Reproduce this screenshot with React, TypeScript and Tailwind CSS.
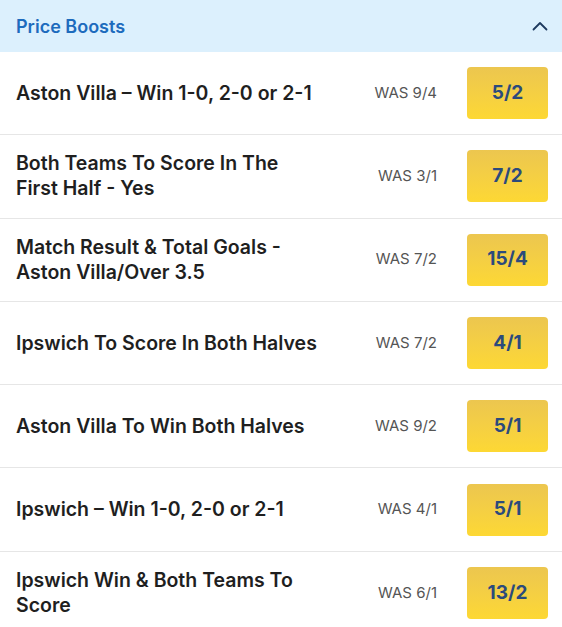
import React from 'react';

const boosts = [
  { title: 'Aston Villa – Win 1-0, 2-0 or 2-1', was: '9/4', price: '5/2' },
  { title: 'Both Teams To Score In The First Half - Yes', was: '3/1', price: '7/2' },
  { title: 'Match Result & Total Goals - Aston Villa/Over 3.5', was: '7/2', price: '15/4' },
  { title: 'Ipswich To Score In Both Halves', was: '7/2', price: '4/1' },
  { title: 'Aston Villa To Win Both Halves', was: '9/2', price: '5/1' },
  { title: 'Ipswich – Win 1-0, 2-0 or 2-1', was: '4/1', price: '5/1' },
  { title: 'Ipswich Win & Both Teams To Score', was: '6/1', price: '13/2' },
];

export default function App() {
  return (
    <div className="w-[562px] h-[627px] overflow-hidden bg-white font-['Inter',sans-serif]">
      <div className="h-[52px] flex items-center justify-between pl-4 pr-[14px] bg-[#dcf0fd]">
        <span className="text-[18px] font-semibold text-[#1d6bbd]">Price Boosts</span>
        <svg width="16" height="10" viewBox="0 0 16 10" fill="none">
          <path d="M1.5 8.5L8 2l6.5 6.5" stroke="#1e3a5f" strokeWidth="1.8" strokeLinecap="round" strokeLinejoin="round" />
        </svg>
      </div>
      {boosts.map((b) => (
        <div key={b.title} className="h-[83.3px] flex items-center pl-4 pr-[14px] border-b border-[#e6e6e6]">
          <div className="flex-1">
            <p className="max-w-[306px] text-[19.5px] leading-[25px] font-semibold text-[#1f1f1f]">{b.title}</p>
          </div>
          <div className="text-[15px] text-[#555]">WAS {b.was}</div>
          <button className="ml-[30px] w-[81px] h-[52px] rounded-[4px] bg-gradient-to-b from-[#ecc64f] to-[#fdd833] text-[19px] font-bold text-[#2b4a7c]">
            {b.price}
          </button>
        </div>
      ))}
    </div>
  );
}
